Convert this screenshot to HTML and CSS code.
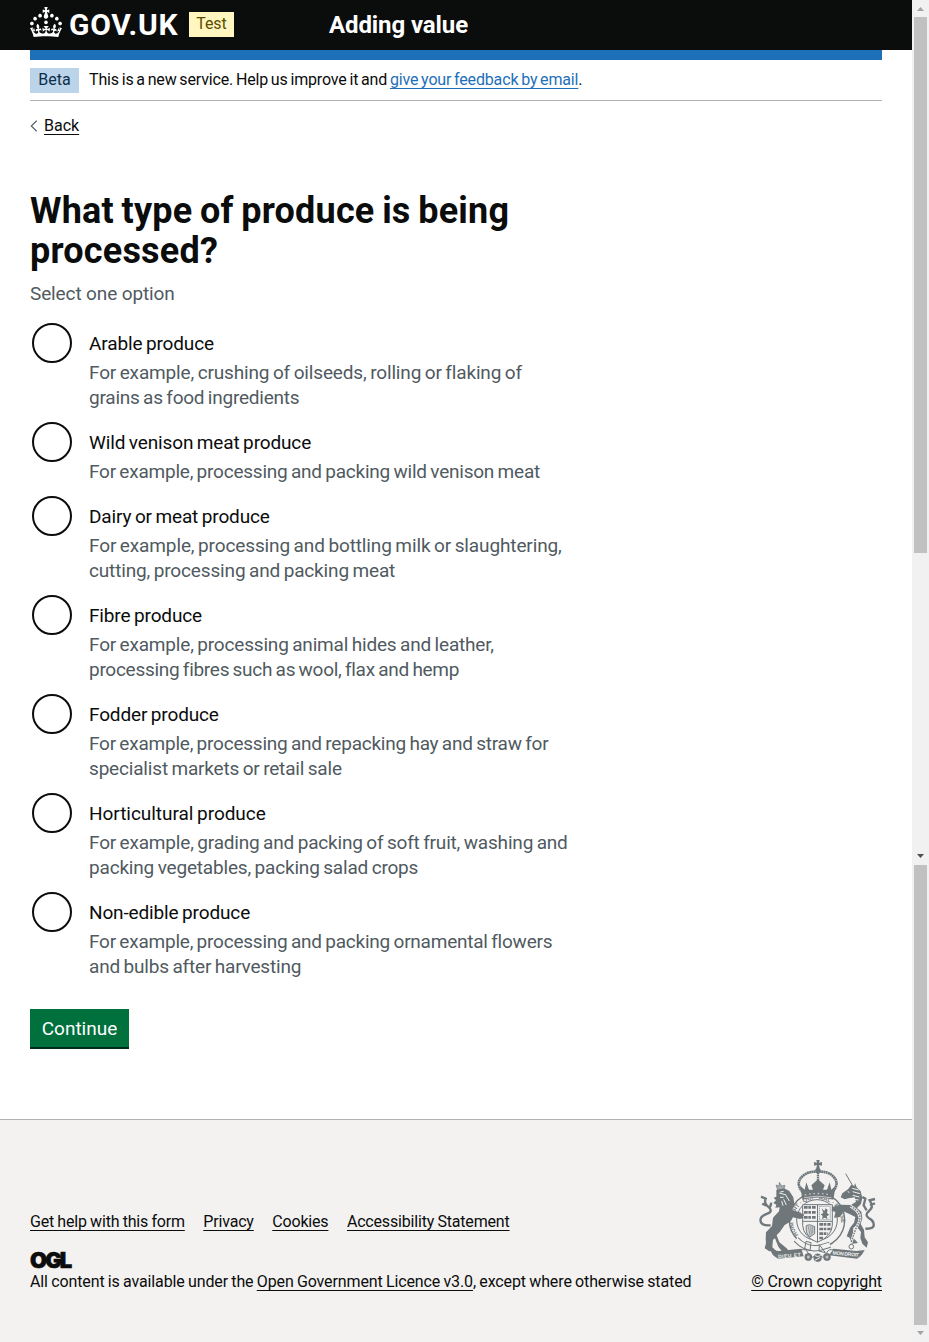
FILE: index.html
```html
<!DOCTYPE html>
<html lang="en">
<head>
<meta charset="utf-8">
<title>What type of produce is being processed?</title>
<link rel="stylesheet" href="styles.css">
</head>
<body>
<div class="shell">
<div class="page">
  <header class="header">
    <div class="brand">
      <svg class="crown" viewBox="0 0 32 30" width="32" height="30" fill="#fff" aria-hidden="true"><path d="M22.6 10.4c-1 .4-2-.1-2.4-1-.4-.9.1-2 1-2.4.9-.4 2 .1 2.4 1s-.1 2-1 2.4m4.9 3c-1 .4-2-.1-2.4-1-.4-.9.1-2 1-2.4.9-.4 2 .1 2.4 1s0 2-1 2.4m3.3 4.8c-1 .4-2-.1-2.4-1-.4-.9.1-2 1-2.4.9-.4 2 .1 2.4 1s-.1 2-1 2.4M17 4.7l2.3 1.2V2.5l-2.3.7-.2-.2.9-3h-3.4l.9 3-.2.2c-.1.1-2.3-.7-2.3-.7v3.4L15 4.7c.1.1.1.2.2.2l-1.3 4c-.1.2-.1.4-.1.6 0 1.1.8 2 1.9 2.2h.7c1-.2 1.9-1.1 1.9-2.1 0-.2 0-.4-.1-.6l-1.3-4c-.1-.2 0-.2.1-.3m-7.6 5.7c.9.4 2-.1 2.4-1 .4-.9-.1-2-1-2.4-.9-.4-2 .1-2.4 1s0 2 1 2.4m-5 3c.9.4 2-.1 2.4-1 .4-.9-.1-2-1-2.4-.9-.4-2 .1-2.4 1s.1 2 1 2.4m-3.2 4.8c.9.4 2-.1 2.4-1 .4-.9-.1-2-1-2.4-.9-.4-2 .1-2.4 1s0 2 1 2.4m14.8 11c4.4 0 8.6.3 12.3.8 1.1-4.5 2.4-7 3.7-8.8l-2.5-.9c.2 1.3.3 1.9 0 2.7-.4-.4-.8-1.1-1.1-2.3l-1.2 4c.7-.5 1.3-.8 2-.9-1.1 2.5-2.6 3.1-3.5 3-1.1-.2-1.7-1.2-1.5-2.1.3-1.2 1.5-1.5 2.1-.1 1.1-2.3-.8-3-2-2.3 1.9-1.9 2.1-3.5.6-5.6-2.1 1.6-2.1 3.2-1.2 5.5-1.2-1.4-3.2-.6-2.5 1.6.9-1.4 2.1-.5 1.9.8-.2 1.1-1.7 2.1-3.5 1.9-2.7-.2-2.9-2.1-2.9-3.6.7-.1 1.9.5 2.9 1.9l.4-4.3c-1.1 1.1-2.1 1.4-3.2 1.4.4-1.2 2.1-3 2.1-3h-5.4s1.7 1.9 2.1 3c-1.1 0-2.1-.2-3.2-1.4l.4 4.3c1-1.4 2.2-2 2.9-1.9-.1 1.5-.2 3.4-2.9 3.6-1.9.2-3.4-.8-3.5-1.9-.2-1.3 1-2.2 1.9-.8.7-2.3-1.2-3-2.5-1.6.9-2.2.9-3.9-1.2-5.5-1.5 2-1.3 3.7.6 5.6-1.2-.7-3.1 0-2 2.3.6-1.4 1.8-1.1 2.1.1.2.9-.3 1.9-1.5 2.1-.9.2-2.4-.5-3.5-3 .6 0 1.2.3 2 .9l-1.2-4c-.3 1.1-.7 1.9-1.1 2.3-.3-.8-.2-1.4 0-2.7l-2.9.9C1.3 23 2.6 25.5 3.7 30c3.7-.5 7.9-.8 12.3-.8"/><circle cx="16" cy="15.4" r="1.8"/></svg>
      <span class="wordmark">GOV.UK</span>
      <span class="tag tag-test">Test</span>
    </div>
    <span class="service">Adding value</span>
  </header>
  <div class="container">
    <div class="bluebar"></div>
    <div class="phase">
      <span class="tag tag-beta">Beta</span>
      <span class="phase-text">This is a new service. Help us improve it and <a class="link-blue" href="#">give your feedback by email</a>.</span>
    </div>
    <div class="back">
      <svg width="7" height="12" viewBox="0 0 7 12" fill="none" stroke="#505a5f" stroke-width="1.1"><path d="M6.7.7 1.3 6l5.4 5.3"/></svg>
      <a href="#">Back</a>
    </div>
    <main class="main">
      <h1>What type of produce is being<br>processed?</h1>
      <p class="hint">Select one option</p>
      <div class="radios">
        <label class="radio"><span class="dot"></span><span class="copy"><span class="label">Arable produce</span><span class="desc"><span class="loose">For example, crushing of oilseeds, rolling or flaking of</span><br><span class="tight">grains as food ingredients</span></span></span></label>
        <label class="radio"><span class="dot"></span><span class="copy"><span class="label">Wild venison meat produce</span><span class="desc"><span class="tight">For example, processing and packing wild venison meat</span></span></span></label>
        <label class="radio"><span class="dot"></span><span class="copy"><span class="label">Dairy or meat produce</span><span class="desc"><span class="looser">For example, processing and bottling milk or slaughtering,</span><br><span class="loose">cutting, processing and packing meat</span></span></span></label>
        <label class="radio"><span class="dot"></span><span class="copy"><span class="label">Fibre produce</span><span class="desc">For example, processing animal hides and leather,<br><span class="tighter">processing fibres such as wool, flax and hemp</span></span></span></label>
        <label class="radio"><span class="dot"></span><span class="copy"><span class="label">Fodder produce</span><span class="desc"><span class="tight">For example, processing and repacking hay and straw for</span><br>specialist markets or retail sale</span></span></label>
        <label class="radio"><span class="dot"></span><span class="copy"><span class="label looser">Horticultural produce</span><span class="desc">For example, grading and packing of soft fruit, washing and<br>packing vegetables, packing salad crops</span></span></label>
        <label class="radio"><span class="dot"></span><span class="copy"><span class="label">Non-edible produce</span><span class="desc"><span class="tight">For example, processing and packing ornamental flowers</span><br>and bulbs after harvesting</span></span></label>
      </div>
      <button class="button" type="button">Continue</button>
    </main>
  </div>
  <footer class="footer">
    <div class="footer-left">
      <nav class="footer-links"><a href="#">Get help with this form</a><a href="#">Privacy</a><a href="#">Cookies</a><a href="#">Accessibility Statement</a></nav>
      <div class="ogl">OGL</div>
      <div class="licence">All content is available under the <a href="#">Open Government Licence v3.0</a>, except where otherwise stated</div>
    </div>
    <div class="footer-right">
      <svg class="arms" width="118" height="104" viewBox="0 6 354 312" fill="#6f777b" stroke="#6f777b" aria-hidden="true">
        <!-- garter and shield -->
        <circle cx="177" cy="186" r="83" fill="#f3f2f1" stroke-width="4"/>
        <circle cx="177" cy="186" r="61" fill="none" stroke-width="3"/>
        <path id="garter" d="M121 231a72 66 0 1 1 112 0" fill="none" stroke="none"/>
        <text class="honi"><textPath href="#garter">HONI · SOIT · QUI · MAL · PENSE</textPath></text>
        <path d="M134 140h89v62q-2 34-45 51-42-17-44-51z" fill="#f3f2f1" stroke-width="3"/>
        <path d="M178.500 140v112M134 190h89" fill="none" stroke-width="3"/>
        <path d="M138 148h36M138 163h36M138 178h36M184 199h34M184 213h34M184 227h26M184 240h12" fill="none" stroke-width="8" stroke-dasharray="11 2 8 3"/>
        <path d="M184 145h33v40h-33z" fill="none" stroke-width="2" stroke-dasharray="4 2"/>
        <path d="m191 151 8 8 4-8 6 5-2 9 7 5-8 5 3 8-9-4-8 4 2-9-6-5 8-4z" stroke="none"/>
        <path d="M145 203c14-7 21 4 25 2v22l-15 10c-8-8-12-16-10-34z" fill="#d2d3d3" stroke-width="3"/>
        <path d="m151 205 5 27m2-28 2 25m4-24v21" fill="none" stroke-width="2"/>
        <!-- garter buckle -->
        <path d="M114 244q32 34 72 25l30-9" fill="none" stroke-width="19"/>
        <path d="M114 244q32 34 72 25l30-9" fill="none" stroke="#f3f2f1" stroke-width="13"/>
        <path d="m144 250 15 4-3 24-16-6zM184 260l18 24-19-5z" fill="none" stroke-width="3"/>
        <!-- imperial crown -->
        <path d="M175 6h10l-2 8 9-2v11l-9-2 2 9h-10l2-9-9 2V12l9 2z" stroke="none"/>
        <circle cx="180" cy="37" r="8" stroke="none"/>
        <path d="M134 102q-22-25-3-45 17-18 49-16 32-2 47 16 19 20-4 45" fill="none" stroke-width="8" stroke-dasharray="6 1"/>
        <path d="M180 44v45" fill="none" stroke-width="7" stroke-dasharray="5 1"/>
        <path d="m133 125-6-42 13 12 5-22 8 22h12l-5-13 20-18 20 18-5 13h12l8-22 5 22 13-12-7 42q-46-13-93 0z" stroke="none"/>
        <path d="M138 119q40-9 82 0" fill="none" stroke="#f3f2f1" stroke-width="2"/>
        <path d="M140 111q40-9 78 0" fill="none" stroke="#c3c6c7" stroke-width="4" stroke-dasharray="5 8"/>
        <!-- lion -->
        <path d="m59 96-5-15 9 3 1-11 7 11 10-2-4 14z" fill="#a5aaac" stroke-width="2"/>
        <g stroke="none">
          <path d="m55 96 23-5 16 8 12 19 4 25-9 12 28 9 8 15-11 4-21-5-8 13-17 10-14 20-10 11 8 21 22 18 8 10H73l-12-15-10-25-6 4-2 23 13 12H34l-14-9 4-16-1-12 1-20 18-19 3-25 18-19 2-12-13 1 3-9-9-5 8-8-7-8 8-3z"/>
          <path d="m104 166 23 4 9-4 2 7-12 7z"/>
        </g>
        <path d="m64 105 18 5m-16 8 11 0m5-9 12 20m-17-5 8 17m-14-12 4 14M67 102l10-2" fill="none" stroke="#f3f2f1" stroke-width="3"/>
        <path d="M38 202q-35 2-30-20 3-9 20-15 21-7-1-24-9-10-4-21l-14-6M28 143q-8 0-15-7M31 151q9-6 8-17" fill="none" stroke-width="7"/>
        <!-- unicorn -->
        <path d="m263 47 21 36" fill="none" stroke-width="3"/>
        <g stroke="none">
          <path d="m280 80 9 4 2-9 5 13 12 12 5 19-4 19-12 12 13 11 3 20-5 17 10 17 2 23 10 15-4 16-13-12-6-17 2-18-15-19-8 6-2 29 16 17-20 3-5-19-9-4 10-26 12-15 4-17-16-8-20-9-10 17-18 2 5-17-12-4 2-11 24-7 32 1 15-10-4-13-18 3-12 3-12-6 5-12 17-12z"/>
        </g>
        <path d="m283 91 19 5m-18 5 22 6m-22 5 20 5m-16 7 14 2m-33-25 5 2" fill="none" stroke="#f3f2f1" stroke-width="3"/>
        <path d="M322 212q28 2 25-15-1-9-14-16-15-10 0-22 16-12 2-32l16-4M336 141l15-5M326 157l-9-15 5-20-9-5" fill="none" stroke-width="7"/>
        <path d="M277 144q38 22 26 48-13 25-24 64" fill="none" stroke="#f3f2f1" stroke-width="8"/>
        <path d="M277 144q38 22 26 48-13 25-24 64" fill="none" stroke-width="4" stroke-dasharray="5 3"/>
        <circle cx="280" cy="266" r="7" fill="none" stroke-width="3"/>
        <!-- compartment and motto scroll -->
        <path d="M128 276q18-5 22 9l13 13 15-9 15 9 13-13q5-14 23-9" fill="none" stroke-width="3"/>
        <circle cx="151" cy="297" r="11"/><circle cx="207" cy="297" r="11"/><circle cx="179" cy="299" r="12"/>
        <circle cx="151" cy="297" r="5" fill="#c3c6c7"/><circle cx="207" cy="297" r="5" fill="#c3c6c7"/><path d="M167 288q12 15 24 0m-20 19 16-9" fill="none" stroke="#f3f2f1" stroke-width="3"/>
        <path d="m37 276 25 3 68-7 7 23-77 7-12-8-5-5z" stroke="none"/>
        <path d="m320 276-25 3-68-7-14 20 84 10 10-7 6-7z" stroke="none"/>
        <text x="60" y="298" class="motto" textLength="68" transform="rotate(-5 94 292)">DIEU ET</text>
        <text x="224" y="293" class="motto" textLength="78" transform="rotate(5 263 290)">MON DROIT</text>
      </svg>
      <a class="copyright" href="#">© Crown copyright</a>
    </div>
  </footer>
</div>
<div class="scroll" aria-hidden="true">
  <span class="arrow arrow-up"></span>
  <span class="thumb thumb-a"></span>
  <span class="arrow arrow-mid"></span>
  <span class="thumb thumb-b"></span>
  <span class="arrow arrow-end"></span>
</div>
</div>
</body>
</html>
```

FILE: styles.css
```css
* { box-sizing: border-box; }
body { margin: 0; background: #fff; color: #0b0c0c; font-family: Roboto, Arial, sans-serif; font-size: 16px; line-height: 20px; }
a { color: inherit; text-decoration: underline; text-decoration-thickness: 1px; text-underline-offset: 3px; text-decoration-skip-ink: none; }
.shell { display: flex; height: 1342px; overflow: hidden; white-space: nowrap; }
.page { width: 912px; display: flex; flex-direction: column; }
.header { height: 50px; background: #0b0c0c; color: #fff; display: flex; align-items: center; padding: 0 30px; }
.brand { display: flex; align-items: center; width: 299px; }
.crown { margin-top: -6px; }
.wordmark { width: 109px; margin-left: 7px; margin-right: 11px; font-size: 30px; font-weight: 700; line-height: 50px; letter-spacing: .75px; }
.tag { height: 25px; line-height: 24px; text-align: center; font-size: 16px; }
.tag-test { width: 45px; margin-top: -1px; background: #fff7bf; color: #594d00; letter-spacing: -.1px; }
.tag-beta { width: 49px; background: #bbd4ea; color: #0c2d4a; margin-right: 10px; }
.service { font-size: 24px; font-weight: 700; letter-spacing: -.1px; }
.container { padding: 0 30px; }
.bluebar { height: 10px; background: #1d70b8; }
.phase { height: 41px; padding-top: 8px; border-bottom: 1px solid #b1b4b6; display: flex; }
.phase-text { line-height: 24px; letter-spacing: -.16px; word-spacing: -1px; }
.link-blue { color: #1d70b8; }
.back { display: flex; align-items: center; gap: 7px; height: 20px; margin-top: 15px; }
.main { padding-top: 55px; }
h1 { margin: 0; font-size: 36px; line-height: 40px; font-weight: 700; letter-spacing: .2px; word-spacing: -1.5px; }
.hint { margin: 10px 0 17px; font-size: 19px; line-height: 25px; color: #505a5f; letter-spacing: -.12px; }
.radio { display: flex; padding-left: 2px; margin-bottom: 12px; }
.dot { width: 40px; height: 40px; margin-bottom: -3px; flex: none; border: 2px solid #0b0c0c; border-radius: 50%; }
.copy { padding-left: 17px; font-size: 19px; line-height: 25px; }
.label { display: block; height: 37px; padding-top: 8px; letter-spacing: -.14px; word-spacing: -1px; }
.desc { display: block; color: #505a5f; letter-spacing: -.18px; word-spacing: -1px; }
.tight { letter-spacing: -.23px; }
.tighter { letter-spacing: -.28px; }
.loose { letter-spacing: -.15px; }
.looser { letter-spacing: -.12px; }
.label.looser { letter-spacing: -.04px; }
.button { display: block; width: 99px; height: 38px; margin: 30px 0 0; padding: 0; border: 0; background: #00703c; color: #fff; font: 19px/39px Roboto, sans-serif; box-shadow: 0 2px 0 #002d18; }
.footer { margin-top: 72px; flex: 1; border-top: 1px solid #b1b4b6; background: #f3f2f1; padding: 0 30px; display: flex; justify-content: space-between; }
.footer-left { padding-top: 92px; }
.footer-links { display: flex; gap: 18.5px; letter-spacing: -.18px; word-spacing: -.5px; }
.ogl { height: 20px; margin-top: 18px; font: 900 22px/20px Inter, sans-serif; letter-spacing: -1.9px; -webkit-text-stroke: .6px #0b0c0c; }
.licence { margin-top: 2px; letter-spacing: -.11px; word-spacing: -.6px; }
.footer-right { padding-top: 40px; display: flex; flex-direction: column; align-items: flex-end; }
.arms { margin-right: 6px; }
.copyright { margin-top: 8px; letter-spacing: -.1px; }
.motto { font: 700 15px "Liberation Sans", sans-serif; fill: #f3f2f1; stroke: none; }
.honi { font: 700 17px "Liberation Sans", sans-serif; stroke: none; }
.scroll { width: 17px; background: #f1f1f1; display: flex; flex-direction: column; align-items: center; }
.thumb { width: 13px; background: #c1c1c1; }
.thumb-a { height: 536px; margin-top: 6px; }
.thumb-b { height: 460px; margin-top: 7px; }
.arrow { width: 7px; height: 4px; background: #a3a3a3; clip-path: polygon(0 0, 100% 0, 50% 100%); }
.arrow-up { margin-top: 7px; clip-path: polygon(50% 0, 100% 100%, 0 100%); }
.arrow-mid { margin-top: 301px; background: #505050; }
.arrow-end { margin-top: 6px; }
```
